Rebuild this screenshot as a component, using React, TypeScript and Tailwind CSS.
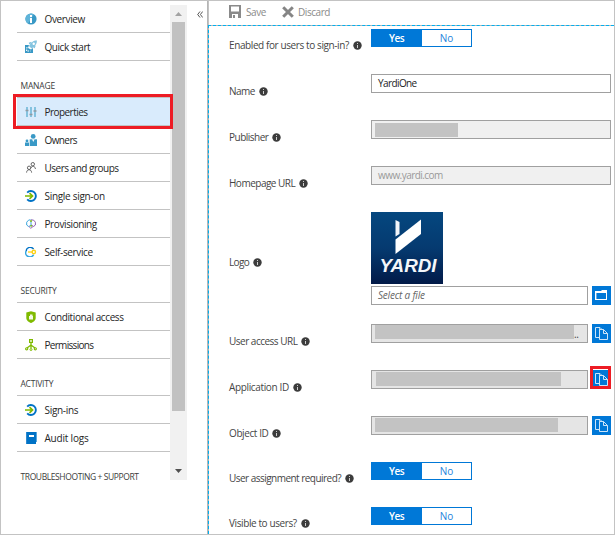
import type { ReactNode } from "react";

const OverviewIcon = () => (
  <svg width="12" height="12" viewBox="0 0 12 12">
    <circle cx="6" cy="6" r="5.6" fill="#3999c6" />
    <path d="M0.5 5A5.6 5.6 0 0 1 9 1.3L3 10.6A5.6 5.6 0 0 1 0.5 5Z" fill="#5fb4d9" />
    <rect x="5" y="2" width="2" height="2" fill="#fff" />
    <rect x="5" y="5" width="2" height="5" fill="#fff" />
  </svg>
);

const RocketIcon = () => (
  <svg width="12" height="13" viewBox="0 0 12 13">
    <path d="M0 5H4L3 8L6 9.5L8 8V13H0Z" fill="#3999c6" />
    <path d="M2 7L1.5 11L5.5 11" stroke="#fff" strokeWidth="1" strokeDasharray="1.5 1" fill="none" />
    <path d="M12 0.5C8 0.5 6 2.5 4 6L6.5 8.5C10 6.5 12 4 12 0.5Z" fill="#84c4e0" />
    <path d="M4 3.5L6.5 2.5M9 8L10 5.5" stroke="#84c4e0" strokeWidth="1.5" />
    <circle cx="8.7" cy="3.8" r="1.2" fill="#fff" />
  </svg>
);

const SlidersIcon = () => (
  <svg width="12" height="12" viewBox="0 0 12 12">
    <path d="M2 1V11M6 1V11M10 1V11" stroke="#84c2df" strokeWidth="2" />
    <path d="M0.5 4.5H3.5M4.5 8.5H7.5M8.5 5H11.5" stroke="#8f9ba3" strokeWidth="1.6" />
  </svg>
);

const OwnersIcon = () => (
  <svg width="12" height="12" viewBox="0 0 12 12">
    <circle cx="8.2" cy="2.4" r="2.4" fill="#3999c6" />
    <path d="M4.7 12V5.3H12V12Z" fill="#3999c6" />
    <path d="M7 5.2L8.3 8L9.6 5.2Z" fill="#fff" />
    <circle cx="2" cy="6.9" r="1.4" fill="#3999c6" />
    <path d="M0 12V8.5H4V12Z" fill="#3999c6" />
  </svg>
);

const UsersIcon = () => (
  <svg width="10" height="11" viewBox="0 0 10 11" fill="none" stroke="#555" strokeWidth="0.9">
    <circle cx="6.8" cy="2.2" r="1.7" />
    <path d="M5 6C5 3.8 9.4 3.6 9.4 7" />
    <circle cx="3.1" cy="5.8" r="1.7" />
    <path d="M0.6 10.6C0.6 6.8 5.6 6.8 5.6 10.6" />
  </svg>
);

const SignOnIcon = () => (
  <svg width="12" height="12" viewBox="0 0 12 12" fill="none">
    <path d="M2.2 2.6A5 5 0 1 1 2.2 9.4" stroke="#0072c6" strokeWidth="1.9" />
    <path d="M0 6H7M4.5 3.2L7.5 6L4.5 8.8" stroke="#7fba00" strokeWidth="1.7" />
  </svg>
);

const ProvisioningIcon = () => (
  <svg width="10" height="10" viewBox="0 0 10 10" fill="none" strokeWidth="1">
    <path d="M4.5 0.7L2.5 1.2L0.7 3.2V6L2.5 7.5L5 6.5V2" stroke="#3aa5dd" />
    <path d="M5 0.8L7.7 1.2L9.4 3.2V6L7.5 7.5L5.5 6" stroke="#8b5fb0" />
    <path d="M2.8 7.4L4.8 9.3L7.2 7.4" stroke="#9b6ab8" />
    <circle cx="5" cy="2" r="0.9" fill="#7fba00" />
    <circle cx="5.2" cy="6.8" r="0.9" fill="#7fba00" />
  </svg>
);

const SelfServiceIcon = () => (
  <svg width="12" height="10" viewBox="0 0 12 10" fill="none">
    <path d="M8.6 2.2A4 4 0 0 0 1.2 4.2" stroke="#0072c6" strokeWidth="1.3" />
    <path d="M1.1 4A4 4 0 0 0 8.6 7.6" stroke="#35a7e0" strokeWidth="1.5" />
    <path d="M3 5H8" stroke="#fcd116" strokeWidth="1.3" />
    <circle cx="8.8" cy="5" r="1.7" stroke="#fcd116" strokeWidth="1.4" />
  </svg>
);

const ShieldIcon = () => (
  <svg width="10" height="12" viewBox="0 0 10 12">
    <path d="M5 0.2L9.7 1.5V7C9.7 9.5 7 11.3 5 12C3 11.3 0.3 9.5 0.3 7V1.5Z" fill="#7fba00" />
    <path d="M3 5H4V3.5H6.5V5H7V8.5H3Z" fill="#fff" opacity="0.9" />
  </svg>
);

const PermissionsIcon = () => (
  <svg width="12" height="12" viewBox="0 0 12 12" fill="none" stroke="#7fba00">
    <rect x="4.6" y="0.6" width="2.8" height="2.8" strokeWidth="1.2" />
    <path d="M6 3.5V9M2 9L6 6L10 9" strokeWidth="1.3" />
    <circle cx="1.7" cy="9.8" r="1.1" strokeWidth="1.1" />
    <circle cx="6" cy="10.5" r="1" strokeWidth="1" />
    <circle cx="10.3" cy="9.8" r="1.1" strokeWidth="1.1" />
  </svg>
);

const BookIcon = () => (
  <svg width="11" height="12" viewBox="0 0 11 12">
    <rect width="10" height="12" fill="#0072c6" />
    <rect x="10" width="1" height="10" fill="#59a7dc" />
    <rect width="1" height="12" fill="#2c89cf" />
    <rect x="3" y="3" width="5" height="2" fill="#fff" />
  </svg>
);

const InfoDot = () => (
  <svg className="shrink-0" width="9" height="9" viewBox="0 0 9 9">
    <circle cx="4.5" cy="4.5" r="4.2" fill="#3c3c3c" />
    <path d="M4 2H5V3H4ZM4 4H5V7H4Z" fill="#fff" opacity="0.75" />
  </svg>
);

const SaveIcon = () => (
  <svg width="12" height="13" viewBox="0 0 12 13">
    <path d="M0 0H12V13H0ZM2 1.5V6.5H10V1.5ZM3 9V13H9V9Z" fillRule="evenodd" fill="#8a8a8a" />
    <rect x="4" y="10" width="2" height="3" fill="#8a8a8a" />
  </svg>
);

const DiscardIcon = () => (
  <svg width="12" height="12" viewBox="0 0 12 12">
    <path d="M1.2 1.2L10.8 10.8M10.8 1.2L1.2 10.8" stroke="#858585" strokeWidth="3" />
  </svg>
);

const FolderIcon = () => (
  <svg width="13" height="11" viewBox="0 0 13 11">
    <path d="M0 1H6L7 0H12V10H0Z" fill="#fff" />
    <rect x="1" y="3" width="10" height="6" fill="#0078d7" />
    <rect x="1" y="3" width="1" height="6" fill="#66aee7" />
  </svg>
);

const CopyIcon = () => (
  <svg width="13" height="13" viewBox="0 0 13 13" fill="none" stroke="#cde4f8" strokeWidth="1">
    <path d="M4 10.5H0.5V0.5H5L7.5 3" />
    <path d="M4.5 0.5V3" strokeWidth="0.8" />
    <path d="M4.5 12.5V2.5H8.5L12.5 6.5V12.5Z" fill="#0078d7" />
    <path d="M8.5 2.5V6.5H12.5" />
  </svg>
);

type Item = { label: string; icon: ReactNode; active?: boolean; track: string };

function MenuItem({ label, icon, active, track }: Item) {
  return (
    <div className={`flex h-7 items-center border-b border-[#c3c3c3] ${active ? "bg-[#d9ebfc]" : ""}`}>
      <span className="ml-2 flex w-3 justify-center">{icon}</span>
      <span className={`ml-[7.5px] pt-px text-[10px] leading-none whitespace-nowrap text-[#252525] ${track}`}>
        {label}
      </span>
    </div>
  );
}

function SectionTitle({ children, last, track }: { children: ReactNode; last?: boolean; track: string }) {
  return (
    <div
      className={`h-[37px] pt-[19px] pl-[3.5px] text-[8.5px] leading-[11px] whitespace-nowrap text-[#3c3c3c] ${
        last ? "" : "border-b border-[#c3c3c3]"
      } ${track}`}
    >
      {children}
    </div>
  );
}

function Sidebar() {
  return (
    <aside className="flex w-[206px] shrink-0 items-start pt-1 pl-4">
      <nav className="relative w-[153px]">
        <MenuItem label="Overview" icon={<OverviewIcon />} track="tracking-[-0.36px]" />
        <MenuItem label="Quick start" icon={<RocketIcon />} track="tracking-[-0.45px]" />
        <SectionTitle track="tracking-[-0.2px]">MANAGE</SectionTitle>
        <MenuItem label="Properties" icon={<SlidersIcon />} track="tracking-[-0.55px]" active />
        <MenuItem label="Owners" icon={<OwnersIcon />} track="tracking-[-0.6px]" />
        <MenuItem label="Users and groups" icon={<UsersIcon />} track="tracking-[-0.5px]" />
        <MenuItem label="Single sign-on" icon={<SignOnIcon />} track="tracking-[-0.3px]" />
        <MenuItem label="Provisioning" icon={<ProvisioningIcon />} track="tracking-[-0.4px]" />
        <MenuItem label="Self-service" icon={<SelfServiceIcon />} track="tracking-[-0.36px]" />
        <SectionTitle track="tracking-[-0.25px]">SECURITY</SectionTitle>
        <MenuItem label="Conditional access" icon={<ShieldIcon />} track="tracking-[-0.4px]" />
        <MenuItem label="Permissions" icon={<PermissionsIcon />} track="tracking-[-0.7px]" />
        <SectionTitle track="tracking-[-0.25px]">ACTIVITY</SectionTitle>
        <MenuItem label="Sign-ins" icon={<SignOnIcon />} track="tracking-[-0.3px]" />
        <MenuItem label="Audit logs" icon={<BookIcon />} track="tracking-[-0.2px]" />
        <SectionTitle track="tracking-[-0.4px]" last>
          TROUBLESHOOTING + SUPPORT
        </SectionTitle>
        <div className="absolute top-[89px] -left-1 z-10 h-[35px] w-[160px] border-3 border-[#ed1c24]" />
      </nav>
      <div className="flex h-[475px] w-[17px] flex-col items-center bg-[#f1f1f1]">
        <svg width="17" height="17" viewBox="0 0 17 17">
          <path d="M5 11L8.5 7L12 11Z" fill="#a3a3a3" />
        </svg>
        <div className="h-[389px] w-[13px] bg-[#c1c1c1]" />
        <svg className="mt-auto" width="17" height="17" viewBox="0 0 17 17">
          <path d="M5 6L8.5 10L12 6Z" fill="#505050" />
        </svg>
      </div>
      <svg className="mt-[6px] ml-[10px]" width="6" height="7" viewBox="0 0 6 7" fill="none" stroke="#444" strokeWidth="0.9">
        <path d="M3 0.5L0.7 3.5L3 6.5M5.7 0.5L3.4 3.5L5.7 6.5" />
      </svg>
    </aside>
  );
}

function Toggle() {
  return (
    <div className="flex h-[18px] w-[101px] border border-[#0078d7] leading-[17px]">
      <span className="w-[50px] bg-[#0078d7] pr-px text-center text-[10px] font-semibold tracking-[-0.5px] text-white">
        Yes
      </span>
      <span className="flex-1 text-center text-[10px] text-[#1e83dc]">No</span>
    </div>
  );
}

function Field({ className, children }: { className: string; children?: ReactNode }) {
  return <div className={`flex h-[19px] border border-[#a0a0a0] ${className}`}>{children}</div>;
}

function BlueButton({ children }: { children: ReactNode }) {
  return <div className="flex size-[19px] items-center justify-center bg-[#0078d7]">{children}</div>;
}

function Row({
  label,
  height,
  labelTop = "pt-[10px]",
  track,
  children,
}: {
  label: string;
  height: string;
  labelTop?: string;
  track: string;
  children: ReactNode;
}) {
  return (
    <div className={`flex items-start pl-5 ${height}`}>
      <div className={`flex w-[142px] shrink-0 items-center gap-1 ${labelTop}`}>
        <span className={`text-[10px] leading-[15px] whitespace-nowrap text-[#454545] ${track}`}>{label}</span>
        <InfoDot />
      </div>
      {children}
    </div>
  );
}

function Toolbar() {
  return (
    <div className="flex h-[24px] items-center pb-[3px] pl-5 text-[10px] leading-none tracking-[-0.45px] text-[#8a8a8a]">
      <SaveIcon />
      <span className="ml-[5px] w-[20px]">Save</span>
      <span className="ml-4">
        <DiscardIcon />
      </span>
      <span className="ml-1">Discard</span>
    </div>
  );
}

function YardiLogo() {
  return (
    <svg width="72" height="72" viewBox="0 0 72 72">
      <defs>
        <linearGradient id="navy" x1="0" y1="0" x2="0" y2="1">
          <stop offset="0" stopColor="#05477f" />
          <stop offset="0.5" stopColor="#053a70" />
          <stop offset="1" stopColor="#021a48" />
        </linearGradient>
      </defs>
      <rect width="72" height="72" fill="url(#navy)" />
      <path d="M24.5 8L28.5 10V22L24.5 24.5Z" fill="#f2f5fa" />
      <path d="M50 7.5V22L24.5 42V27.5Z" fill="#fff" />
      <text
        x="8.5"
        y="60"
        textLength="57"
        lengthAdjust="spacingAndGlyphs"
        fontFamily="'Liberation Sans', sans-serif"
        fontWeight="700"
        fontStyle="italic"
        fontSize="18"
        fill="#f4f6fa"
      >
        YARDI
      </text>
    </svg>
  );
}

function Properties() {
  return (
    <main className="h-full bg-white pt-[3px]">
      <Row label="Enabled for users to sign-in?" height="h-[45px]" labelTop="pt-[9px]" track="tracking-[-0.4px]">
        <Toggle />
      </Row>
      <Row label="Name" height="h-[46px]" track="tracking-[-0.5px]">
        <Field className="w-[240px] items-center bg-white pl-[6px] text-[10px] tracking-[-0.6px] text-[#222]">
          YardiOne
        </Field>
      </Row>
      <Row label="Publisher" height="h-[46px]" track="tracking-[-0.5px]">
        <Field className="w-[240px] bg-[#f0f0f0] pt-[2px] pl-[3px]">
          <div className="h-[14px] w-[83px] bg-[#c3c3c3]" />
        </Field>
      </Row>
      <Row label="Homepage URL" height="h-[46px]" track="tracking-[-0.5px]">
        <Field className="w-[240px] items-center bg-[#f0f0f0] pl-[6px] text-[10px] tracking-[-0.55px] text-[#999]">
          www.yardi.com
        </Field>
      </Row>
      <Row label="Logo" height="h-[112px]" labelTop="pt-[43px]" track="tracking-[-0.6px]">
        <div className="flex flex-col gap-[2px]">
          <YardiLogo />
          <div className="flex gap-1">
            <Field className="w-[217px] items-center bg-white pl-[6px] text-[10px] tracking-[-0.2px] text-[#666] italic">
              Select a file
            </Field>
            <BlueButton>
              <FolderIcon />
            </BlueButton>
          </div>
        </div>
      </Row>
      <Row label="User access URL" height="h-[46px]" track="tracking-[-0.5px]">
        <div className="flex gap-1">
          <Field className="w-[217px] bg-[#e5e5e5] pl-[3px] text-[10px] leading-[18px] text-[#444]">
            <div className="h-[14px] w-[199px] bg-[#c3c3c3]" />
            <span className="tracking-[-0.5px]">..</span>
          </Field>
          <BlueButton>
            <CopyIcon />
          </BlueButton>
        </div>
      </Row>
      <Row label="Application ID" height="h-[46px]" track="tracking-[-0.36px]">
        <div className="flex gap-1">
          <Field className="w-[217px] bg-[#e5e5e5] pt-px pl-[4px]">
            <div className="h-[14px] w-[185px] bg-[#c3c3c3]" />
          </Field>
          <div className="relative">
            <BlueButton>
              <CopyIcon />
            </BlueButton>
            <div className="absolute -top-1 -left-[2px] h-[23px] w-[21px] border-3 border-[#ed1c24]" />
          </div>
        </div>
      </Row>
      <Row label="Object ID" height="h-[46px]" track="tracking-[-0.4px]">
        <div className="flex gap-1">
          <Field className="w-[217px] bg-[#e5e5e5] pt-px pl-[3px]">
            <div className="h-[14px] w-[183px] bg-[#c3c3c3]" />
          </Field>
          <BlueButton>
            <CopyIcon />
          </BlueButton>
        </div>
      </Row>
      <Row label="User assignment required?" height="h-[45px]" labelTop="pt-[9px]" track="tracking-[-0.53px]">
        <Toggle />
      </Row>
      <Row label="Visible to users?" height="h-[26px]" labelTop="pt-[9px]" track="tracking-[-0.4px]">
        <Toggle />
      </Row>
    </main>
  );
}

export default function App() {
  return (
    <div className="flex h-[535px] w-[615px] overflow-hidden border border-[#c3c3c3] bg-white font-['Open_Sans','Noto_Sans',sans-serif]">
      <Sidebar />
      <div className="flex min-w-0 flex-1 flex-col border-l border-[#b5b5b5]">
        <div className="border-l border-[#c3c3c3]">
          <Toolbar />
        </div>
        <div className="flex-1 border-t border-l border-dashed border-[#00b0f0] bg-[#b5b5b5]">
          <Properties />
        </div>
      </div>
    </div>
  );
}
